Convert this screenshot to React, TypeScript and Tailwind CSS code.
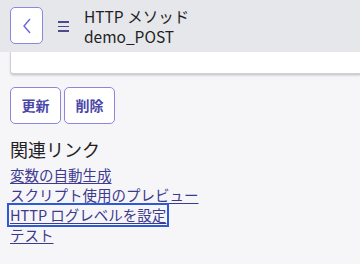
const font = { fontFamily: '"Noto Sans CJK JP", "Noto Sans", sans-serif' };

export default function App() {
  const links = ['変数の自動生成', 'スクリプト使用のプレビュー', 'HTTP ログレベルを設定', 'テスト'];

  return (
    <div className="w-[360px] h-[264px] overflow-hidden bg-[#f6f6f9] text-[#1f1f24]" style={font}>
      <div className="h-[52px] bg-[#e6e7eb] flex items-start">
        <button
          type="button"
          className="mt-[7px] ml-[10px] w-[33px] h-[37px] rounded-[5px] border border-[#8c86dc] bg-white flex items-center justify-center"
        >
          <svg width="10" height="16" viewBox="0 0 10 16" fill="none">
            <path d="M8 1 L2 8 L8 15" stroke="#6b66d6" strokeWidth="1.4" />
          </svg>
        </button>
        <div className="ml-[15px] mt-[21px] flex flex-col gap-[3px]">
          <span className="block w-[11px] h-[1.5px] bg-[#4d4a8c]" />
          <span className="block w-[11px] h-[1.5px] bg-[#4d4a8c]" />
          <span className="block w-[11px] h-[1.5px] bg-[#4d4a8c]" />
        </div>
        <div className="ml-[15px] mt-[6px] text-[15.5px] leading-[20px]">
          <div>HTTP メソッド</div>
          <div>demo_POST</div>
        </div>
      </div>

      <div className="ml-[10px] h-[23px] bg-white rounded-bl-[4px] border-l border-b-2 border-[#cfcfd8] shadow-[0_1px_2px_rgba(0,0,0,0.12)]" />

      <div className="flex gap-[3px] ml-[10px] mt-[12px]">
        <button
          type="button"
          className="w-[51px] h-[37px] rounded-[5px] border border-[#8c86dc] bg-white text-[14px] font-semibold text-[#4a46a8]"
        >
          更新
        </button>
        <button
          type="button"
          className="w-[51px] h-[37px] rounded-[5px] border border-[#8c86dc] bg-white text-[14px] font-semibold text-[#4a46a8]"
        >
          削除
        </button>
      </div>

      <div className="ml-[10px] mt-[11px] text-[18px] leading-[28px]">関連リンク</div>

      <div className="ml-[10px] mt-[2px] flex flex-col items-start">
        {links.map((l, i) => (
          <a
            key={l}
            href="#"
            className={`text-[14.5px] leading-[20px] text-[#3d3a8f] underline underline-offset-2 ${
              i === 2 ? 'outline outline-2 outline-[#2f5ad6] outline-offset-0 -mx-[1px] px-[1px]' : ''
            }`}
          >
            {l}
          </a>
        ))}
      </div>
    </div>
  );
}
